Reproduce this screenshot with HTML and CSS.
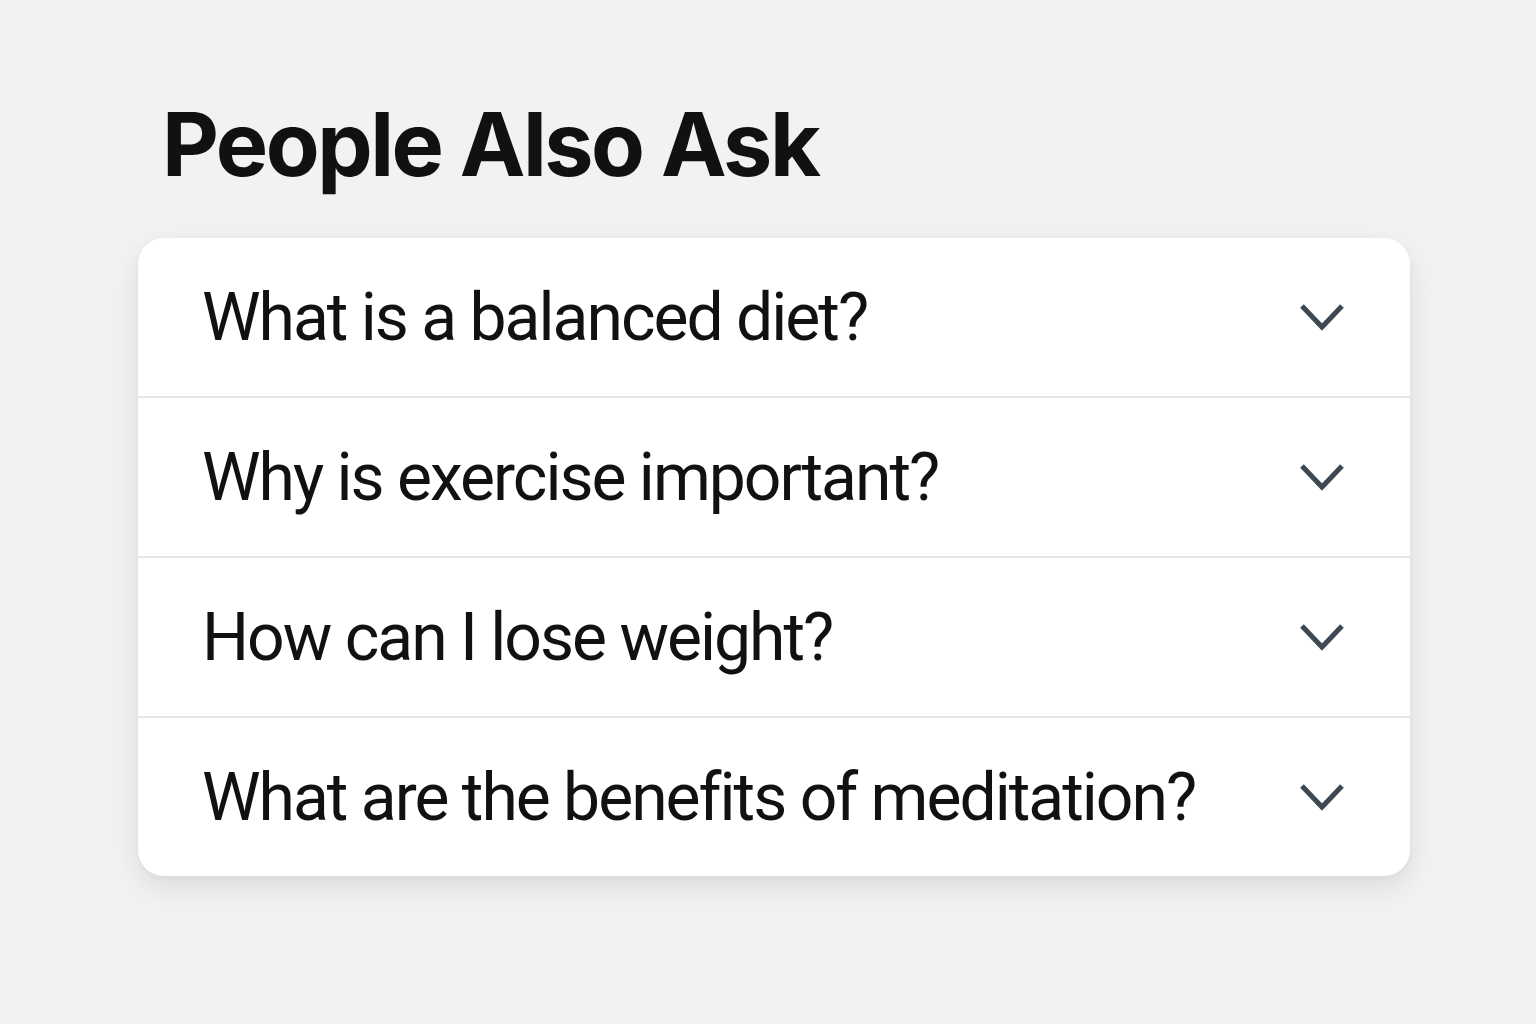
FILE: index.html
```html
<!DOCTYPE html>
<html lang="en">
<head>
<meta charset="utf-8">
<title>People Also Ask</title>
<link rel="stylesheet" href="styles.css">
</head>
<body>
<main class="page">
  <h1 class="title">People Also Ask</h1>
  <section class="card">
    <div class="row"><span class="q">What is a balanced diet?</span><svg class="chev" viewBox="0 0 44 28" width="44" height="28"><path d="M2 3 L22 24 L42 3" fill="none" stroke="#3d4954" stroke-width="5"/></svg></div>
    <div class="row"><span class="q">Why is exercise important?</span><svg class="chev" viewBox="0 0 44 28" width="44" height="28"><path d="M2 3 L22 24 L42 3" fill="none" stroke="#3d4954" stroke-width="5"/></svg></div>
    <div class="row"><span class="q">How can I lose weight?</span><svg class="chev" viewBox="0 0 44 28" width="44" height="28"><path d="M2 3 L22 24 L42 3" fill="none" stroke="#3d4954" stroke-width="5"/></svg></div>
    <div class="row"><span class="q">What are the benefits of meditation?</span><svg class="chev" viewBox="0 0 44 28" width="44" height="28"><path d="M2 3 L22 24 L42 3" fill="none" stroke="#3d4954" stroke-width="5"/></svg></div>
  </section>
</main>
</body>
</html>
```
FILE: styles.css
```css
html, body {
  margin: 0;
  padding: 0;
  background: #f2f2f2;
}
.page {
  width: 1272px;
  min-height: 936px;
  padding: 88px 0 0 138px;
  display: flex;
  flex-direction: column;
}
.title {
  margin: 0 0 38px 24px;
  font-family: Inter, "Liberation Sans", sans-serif;
  font-weight: 700;
  font-size: 88px;
  line-height: 112px;
  letter-spacing: -2.5px;
  color: #111;
}
.card {
  background: #fff;
  border-radius: 26px;
  box-shadow: 0 12px 30px rgba(0,0,0,0.09), 0 2px 6px rgba(0,0,0,0.04);
  display: flex;
  flex-direction: column;
  overflow: hidden;
}
.row {
  height: 158px;
  display: flex;
  align-items: center;
  justify-content: space-between;
  padding: 0 66px 0 64px;
  border-top: 2px solid #e6e6e6;
}
.row:first-child {
  border-top: none;
}
.q {
  font-family: Roboto, "Liberation Sans", sans-serif;
  font-size: 66px;
  letter-spacing: -2px;
  white-space: nowrap;
  color: #111;
}
.chev {
  display: block;
  flex: none;
}
```
